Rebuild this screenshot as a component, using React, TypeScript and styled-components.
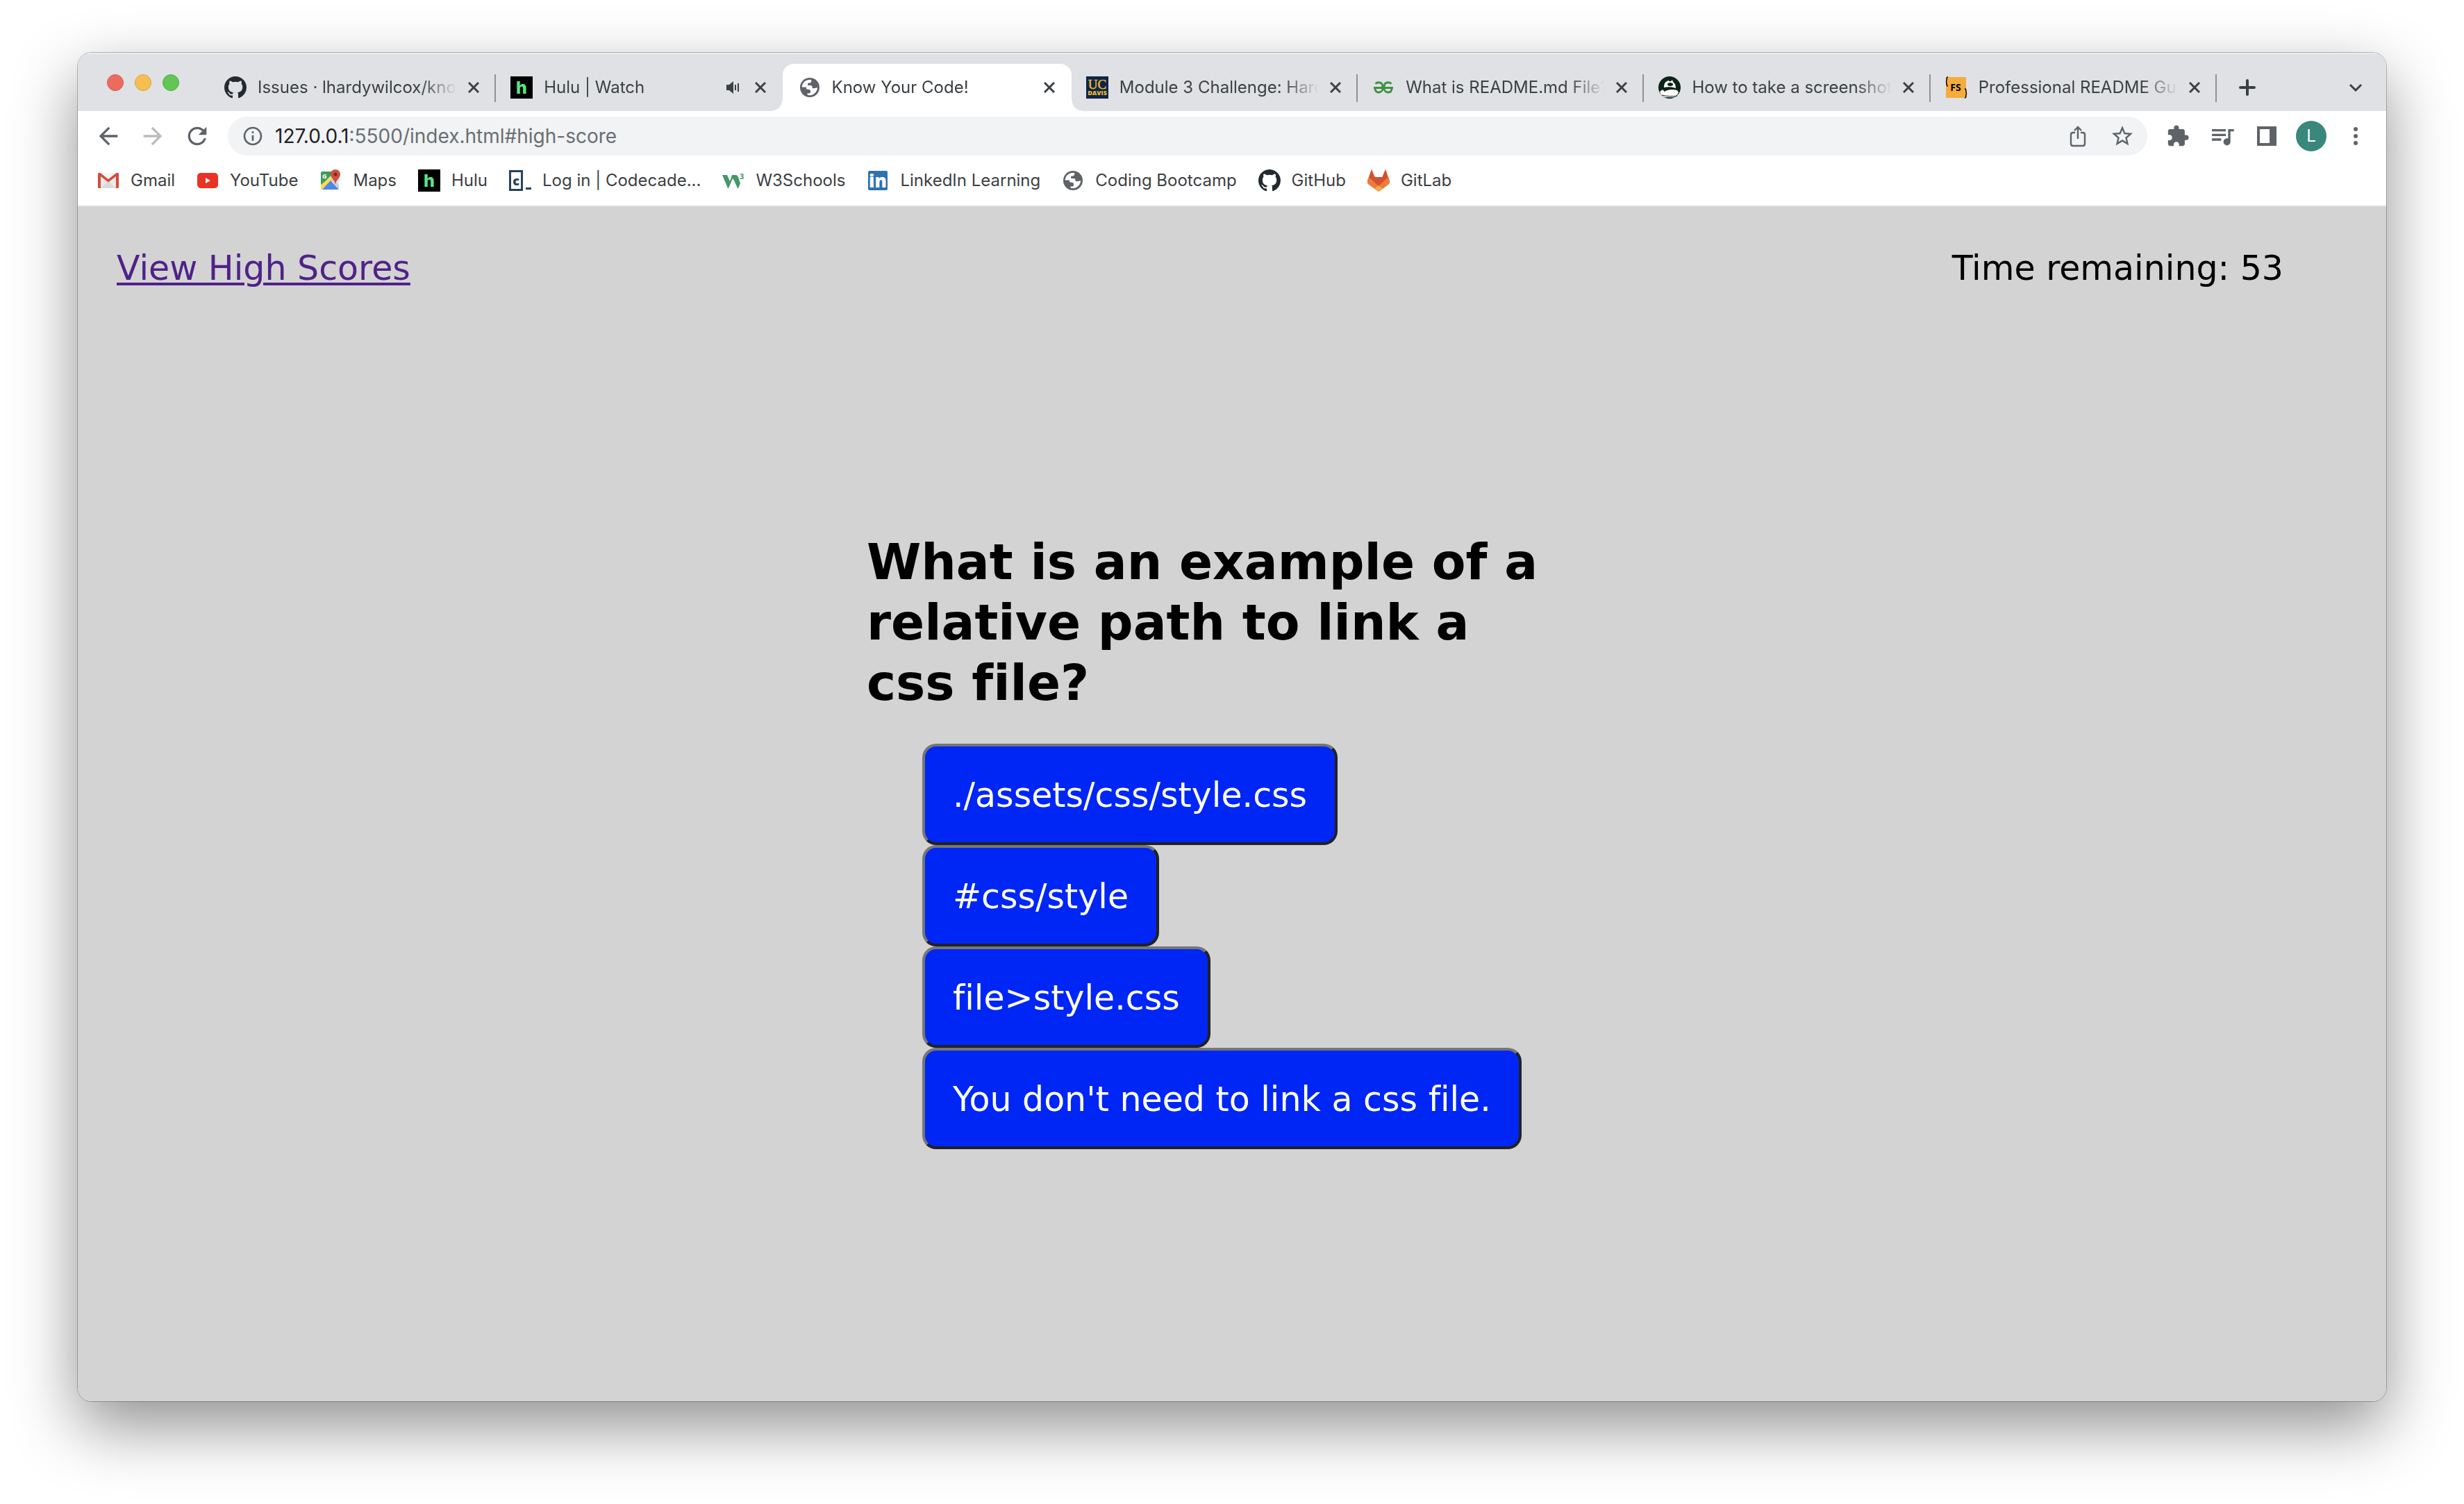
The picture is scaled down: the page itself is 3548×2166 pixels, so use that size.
import React from "react";
import styled, { createGlobalStyle, css } from "styled-components";
import {
  MdArrowBack,
  MdArrowForward,
  MdExtension,
  MdInfoOutline,
  MdQueueMusic,
  MdRefresh,
  MdStarBorder,
} from "react-icons/md";

const GlobalStyle = createGlobalStyle`
  *, *::before, *::after { box-sizing: border-box; }
  body { margin: 0; background: #ffffff; }
  button { font: inherit; color: inherit; cursor: pointer; }
`;

const uiFont = `Inter, "Liberation Sans", sans-serif`;
const pageFont = `Verdana, "DejaVu Sans", sans-serif`;

const Desktop = styled.div`
  display: flex;
  min-height: 100vh;
  padding: 76px 112px 148px;
`;

const BrowserWindow = styled.div`
  display: flex;
  flex: 1;
  flex-direction: column;
  min-width: 0;
  overflow: hidden;
  border-radius: 20px;
  background: #ffffff;
  color: #3c4043;
  font-family: ${uiFont};
  font-size: 24px;
  line-height: 32px;
  box-shadow: 0 0 0 1px rgba(0, 0, 0, 0.25), 0 36px 94px rgba(0, 0, 0, 0.44);
`;

const TabStrip = styled.header`
  display: flex;
  height: 84px;
  padding: 16px 32px 0 42px;
  background: #dfe1e5;
  box-shadow: inset 0 2px 0 #ebecef;
`;

const WindowControls = styled.div`
  display: flex;
  flex: none;
  gap: 16px;
  width: 148px;
  padding-top: 15px;
`;

const WindowDot = styled.button<{ $fill: string; $edge: string }>`
  width: 24px;
  height: 24px;
  padding: 0;
  border: 1px solid ${(p) => p.$edge};
  border-radius: 50%;
  background: ${(p) => p.$fill};
`;

const TabList = styled.div`
  display: flex;
  flex: 1;
  min-width: 0;
`;

const activeTab = css`
  flex-basis: 416px;
  padding-left: 23px;
  border-radius: 16px 16px 0 0;
  background: #ffffff;

  &::before,
  &::after {
    content: "";
    position: absolute;
    bottom: 0;
    width: 16px;
    height: 16px;
  }
  &::before {
    right: 100%;
    background: radial-gradient(circle at 0 0, transparent 15px, #ffffff 16px);
  }
  &::after {
    left: 100%;
    background: radial-gradient(circle at 100% 0, transparent 15px, #ffffff 16px);
  }
`;

const separator = css`
  &::after {
    content: "";
    position: absolute;
    right: 0;
    top: 15px;
    width: 2px;
    height: 40px;
    background: #8f9195;
  }
`;

const TabItem = styled.div<{ $active?: boolean; $separator?: boolean }>`
  position: relative;
  display: flex;
  flex: 1 1 412px;
  align-items: center;
  gap: 16px;
  min-width: 0;
  height: 68px;
  padding: 0 24px 0 21px;
  ${(p) => p.$separator && separator}
  ${(p) => p.$active && activeTab}
`;

const TabTitle = styled.span`
  flex: 1;
  min-width: 0;
  overflow: hidden;
  white-space: nowrap;
  mask-image: linear-gradient(to right, #000 calc(100% - 52px), transparent);
`;

const IconSlot = styled.span`
  display: flex;
  flex: none;
  align-items: center;
  justify-content: center;
  width: 32px;
  height: 32px;
`;

const IconButton = styled.button<{ $size: number; $muted?: boolean }>`
  display: flex;
  flex: none;
  align-items: center;
  justify-content: center;
  width: ${(p) => p.$size}px;
  height: ${(p) => p.$size}px;
  padding: 0;
  border: 0;
  background: none;
  color: ${(p) => (p.$muted ? "#babcbe" : "#5f6368")};
`;

const StripButton = styled(IconButton)`
  color: #3c4043;
`;

const StripActions = styled.div`
  display: flex;
  flex: none;
  align-items: center;
  justify-content: space-between;
  width: 212px;
  height: 68px;
  padding-left: 32px;
`;

const Toolbar = styled.nav`
  display: flex;
  align-items: center;
  height: 72px;
  padding: 0 12px;
`;

const Omnibox = styled.div`
  display: flex;
  flex: 1;
  align-items: center;
  min-width: 0;
  height: 56px;
  margin: 0 12px;
  padding: 0 4px;
  border-radius: 28px;
  background: #f1f3f4;
`;

const Address = styled.div`
  flex: 1;
  overflow: hidden;
  color: #6b6e72;
  font-size: 28px;
  white-space: nowrap;
`;

const Host = styled.span`
  color: #202124;
`;

const Avatar = styled.button`
  width: 44px;
  height: 44px;
  margin: 0 10px;
  padding: 0;
  border: 0;
  border-radius: 50%;
  background: #3a877b;
  && {
    color: #ffffff;
  }
`;

const Bookmarks = styled.nav`
  display: flex;
  align-items: center;
  gap: 31px;
  height: 66px;
  padding: 0 28px 8px;
  border-bottom: 2px solid #dcdcdc;
`;

const BookmarkLink = styled.a`
  display: flex;
  gap: 16px;
  color: #3c4043;
  text-decoration: none;
  white-space: nowrap;
`;

const Page = styled.div`
  flex: 1;
  background: #d3d3d3;
  color: #000000;
  font-family: ${pageFont};
  font-size: 49px;
  font-variant-ligatures: none;
  line-height: 58px;
`;

const PageHeader = styled.div`
  display: flex;
  justify-content: space-between;
  padding: 60px 148px 0 56px;
`;

const ScoresLink = styled.a`
  color: #4f2288;
  text-decoration-thickness: 4px;
  text-underline-offset: 4px;
`;

const Quiz = styled.main`
  max-width: 1052px;
  margin: 350px auto 0;
`;

const Question = styled.h1`
  margin: 0;
  padding-right: 52px;
  font-size: 71px;
  line-height: 87px;
`;

const Choices = styled.ul`
  display: flex;
  flex-direction: column;
  align-items: flex-start;
  margin: 44px 0 0;
  padding: 0 0 0 80px;
  list-style: none;
`;

const ChoiceButton = styled.button`
  display: block;
  padding: 42px 40px 38px;
  border: 4px solid;
  border-color: #767676 #212121 #212121 #767676;
  border-radius: 20px;
  background: #0026f5;
  color: #ffffff;
  font-variant-ligatures: none;
  white-space: nowrap;
`;

const CloseIcon = () => (
  <svg width="16" height="16" viewBox="0 0 16 16" stroke="currentColor" strokeWidth="3">
    <path d="M1 1l14 14M15 1L1 15" />
  </svg>
);

const SpeakerIcon = () => (
  <svg width="20" height="20" viewBox="0 0 20 20" fill="currentColor">
    <path d="M1 6h4l6-5v18l-6-5H1zM13 6h2v8h-2zM17 4h2v12h-2z" />
  </svg>
);

const GlobeIcon = () => (
  <svg width="28" height="28" viewBox="0 0 28 28">
    <circle cx="14" cy="14" r="14" fill="#5f6368" />
    <path
      d="M2.800 13.500C2.800 7.500 8 2.800 14.500 2.800c1 0 1.500.2 1.800.6.3 2-.3 3.600-2.300 4h-1.500c-1 0-1.500.6-1.500 1.500v1.200c0 .5.500.8 1 .8h3c2 0 2.500 1 2.500 2.500 0 1 .8 1.800 1.800 1.800l5.900-.9C24.800 20 20 25.200 14 25.200c-1.500 0-2.500-.2-3.500-.6v-2H13c1.200 0 2-.8 2-2v-1.500c0-1.500-1-2.400-2.200-2.400H11c-1.200 0-2-.8-2-1.700v-1.500z"
      fill="#ffffff"
    />
  </svg>
);

const HuluIcon = () => (
  <svg width="32" height="32" viewBox="0 0 32 32">
    <rect width="32" height="32" fill="#000" />
    <text x="16" y="25" textAnchor="middle" fontFamily="Inter, sans-serif" fontWeight="800" fontSize="25" fill="#5be58a">
      h
    </text>
  </svg>
);

const DavisIcon = () => (
  <svg width="32" height="32" viewBox="0 0 32 32" fill="#f2b82e" textAnchor="middle">
    <rect width="32" height="32" fill="#0d2549" />
    <text x="16" y="18" fontFamily="Liberation Serif, serif" fontSize="19" stroke="#f2b82e" strokeWidth="0.5">
      UC
    </text>
    <text x="16" y="27" fontFamily="Open Sans, sans-serif" fontWeight="800" fontSize="9">
      DAVIS
    </text>
  </svg>
);

const GeeksIcon = () => (
  <svg width="28" height="18" viewBox="0 0 28 18" fill="none" stroke="#3f9142" strokeWidth="2.800">
    <path d="M3 4c1-3 7-3 9 0 1 2 1 4 1 6 0 4-3 6-6 6s-5-2-5-6M25 4c-1-3-7-3-9 0-1 2-1 4-1 6 0 4 3 6 6 6s5-2 5-6M0 9.500h28" />
  </svg>
);

const BadgerIcon = () => (
  <svg width="32" height="32" viewBox="0 0 32 32">
    <circle cx="16" cy="16" r="16" fill="#0c2418" />
    <path d="M8 16c0-5 2-9 5-9l1-2 1 2h3l2-2 1 3c3 2 4 5 4 9-5-2-12-2-17-1z" fill="#fff" />
    <ellipse cx="17" cy="11.500" rx="4" ry="2.500" fill="#0c2418" />
    <path d="M2 22l4-3 3 3c3-3 12-4 18-2l2 3c-1 3-4 6-7 7H10c-4-1-7-4-8-8z" fill="#fff" />
    <path d="M5 27c8 2 15 2 22 1" stroke="#0c2418" fill="none" />
  </svg>
);

const FullStackIcon = () => (
  <svg width="32" height="32" viewBox="0 0 32 32" fontFamily="Open Sans, sans-serif">
    <rect x="1" y="1" width="29" height="30" fill="#f6ac3c" />
    <text x="15" y="21" textAnchor="middle" fontWeight="700" fontSize="14">
      FS
    </text>
    <path
      d="M4 1c-3-1-1 6-3 6.500 2 .5 0 7 3 6.500M28 18c3-1 1 6 3 6.500-2 .5 0 7-3 6.500"
      fill="none"
      stroke="#000"
      strokeWidth="1.500"
    />
  </svg>
);

const GmailIcon = () => (
  <svg width="32" height="32" viewBox="0 0 32 32">
    <rect x="1" y="5" width="30" height="22" rx="2" fill="#e9e9e9" />
    <path d="M5 27l11-10 11 10z" fill="#dadada" />
    <path d="M5 8l11 9 11-9-2-3H7z" fill="#f5f5f5" />
    <path
      d="M1 7c0-3 3-2.500 4-1.500L16 14 27 5.500c1-1 4-1.500 4 1.500v18c0 1.500-1 2-2 2h-2V10l-11 8.500L5 10v17H3c-1 0-2-.5-2-2z"
      fill="#d54b3d"
    />
  </svg>
);

const YouTubeIcon = () => (
  <svg width="32" height="32" viewBox="0 0 32 32">
    <rect x="1" y="5" width="30" height="22" rx="5" fill="#ea3323" />
    <path d="M13 12v8l7-4z" fill="#fff" />
  </svg>
);

const MapsIcon = () => (
  <svg width="32" height="32" viewBox="0 0 32 32">
    <rect x="2" y="3" width="26" height="26" rx="2" fill="#e6e6e6" />
    <path d="M4 3h18L2 24V5c0-1 1-2 2-2z" fill="#419a5b" />
    <path d="M2 22L19 9l3 4L6 29H4c-1 0-2-1-2-2z" fill="#fbdc4d" />
    <path d="M4 29l12-13 12 13z" fill="#5087ec" />
    <path d="M17 15l2-2 9 10v5z" fill="#cfcfcf" />
    <path d="M23 0c4 0 7 3 7 7 0 6-6 7-7 15-1-8-7-9-7-15 0-4 3-7 7-7z" fill="#d05041" />
    <circle cx="23" cy="7" r="2.500" fill="#7a2a20" />
    <text x="4" y="13" fontFamily="Open Sans, sans-serif" fontWeight="700" fontSize="9" fill="#fff">
      G
    </text>
  </svg>
);

const CodecademyIcon = () => (
  <svg width="32" height="32" viewBox="0 0 32 32">
    <rect x="1.500" y="2.500" width="17" height="27" fill="#fff" stroke="#26425a" strokeWidth="3" />
    <text
      x="10"
      y="23"
      textAnchor="middle"
      fontFamily="Open Sans, sans-serif"
      fontWeight="800"
      fontSize="18"
      fill="#26425a"
    >
      c
    </text>
    <rect x="24" y="26" width="8" height="3" fill="#26425a" />
  </svg>
);

const SchoolsIcon = () => (
  <svg width="32" height="32" viewBox="0 0 32 32" fill="#43986b">
    <path d="M0 8h7l4 9 3-9h5c2 0 3 1 4 3l3 9-3 7h-1l-5-11-2-3-6 14h-1z" />
    <text x="25" y="14" fontFamily="Open Sans, sans-serif" fontWeight="700" fontSize="11">
      3
    </text>
  </svg>
);

const LinkedInIcon = () => (
  <svg width="32" height="32" viewBox="0 0 32 32">
    <rect x="2" y="2" width="28" height="28" rx="2" fill="#2e72af" />
    <text
      x="16"
      y="26"
      textAnchor="middle"
      fontFamily="Open Sans, sans-serif"
      fontWeight="800"
      fontSize="26"
      fill="#fff"
    >
      in
    </text>
  </svg>
);

const GitLabIcon = () => (
  <svg width="32" height="32" viewBox="0 0 32 32">
    <path d="M6 0l5 11h10l5-11 6 16c1 2 0 4-1 5L16 32 1 21c-1-1-2-3-1-5z" fill="#e9783a" />
    <path d="M6 0l4 11h12l4-11 4 12L16 26 2 12z" fill="#d25033" />
    <path d="M2 11l14 13L30 11l2 5c1 2 0 4-1 5L16 32 1 21c-1-1-2-3-1-5z" fill="#ed7b3a" />
    <path d="M6 11h20L16 23z" fill="#d25033" />
    <path d="M16 23l6 5-6 4-6-4z" fill="#f3a74a" />
  </svg>
);

const GitHubIcon = () => (
  <svg width="32" height="32" viewBox="0 0 16 16" fill="#24292f">
    <path
      fillRule="evenodd"
      d="M8 0C3.580 0 0 3.580 0 8c0 3.540 2.290 6.530 5.470 7.590.4.070.550-.170.550-.380 0-.190-.010-.820-.010-1.490-2.010.370-2.530-.490-2.690-.940-.090-.230-.480-.940-.820-1.130-.280-.150-.680-.520-.010-.530.630-.010 1.080.580 1.230.820.720 1.210 1.870.870 2.330.660.070-.520.280-.870.510-1.070-1.780-.2-3.640-.890-3.640-3.950 0-.870.310-1.590.820-2.150-.080-.2-.360-1.020.080-2.120 0 0 .670-.210 2.200.820.640-.180 1.320-.270 2-.270s1.360.090 2 .270c1.530-1.040 2.200-.820 2.200-.820.440 1.100.160 1.920.080 2.120.510.560.820 1.270.820 2.150 0 3.070-1.870 3.750-3.650 3.950.290.250.540.730.540 1.480 0 1.070-.010 1.930-.010 2.200 0 .210.150.460.550.380A8.013 8.013 0 0 0 16 8c0-4.420-3.580-8-8-8z"
    />
  </svg>
);

const ShareIcon = () => (
  <svg width="32" height="32" viewBox="0 0 32 32" fill="none" stroke="currentColor" strokeWidth="2.400">
    <path d="M12 11H9c-1.800 0-3 1.200-3 3v13c0 1.800 1.200 3 3 3h14c1.800 0 3-1.200 3-3V14c0-1.800-1.200-3-3-3h-3M16 20V4M11 8l5-5 5 5" />
  </svg>
);

const SidePanelIcon = () => (
  <svg width="28" height="28" viewBox="0 0 28 28">
    <path d="M0 0h28v28H0zM4 4v20h14V4z" fill="currentColor" fillRule="evenodd" />
  </svg>
);

const MenuIcon = () => (
  <svg width="28" height="28" viewBox="0 0 28 28" fill="currentColor">
    <circle cx="14" cy="4" r="3" />
    <circle cx="14" cy="14" r="3" />
    <circle cx="14" cy="24" r="3" />
  </svg>
);

const PlusIcon = () => (
  <svg width="24" height="24" viewBox="0 0 24 24" stroke="currentColor" strokeWidth="4" strokeLinecap="round">
    <path d="M12 2v20M2 12h20" />
  </svg>
);

const ChevronIcon = () => (
  <svg width="20" height="12" viewBox="0 0 20 12" fill="none" stroke="currentColor" strokeWidth="3">
    <path d="M2 2l8 8 8-8" />
  </svg>
);

interface TabData {
  title: string;
  icon: React.ComponentType;
  active?: boolean;
  audible?: boolean;
  separator?: boolean;
}

const tabs: TabData[] = [
  { title: "Issues · lhardywilcox/know", icon: GitHubIcon, separator: true },
  { title: "Hulu | Watch", icon: HuluIcon, audible: true },
  { title: "Know Your Code!", icon: GlobeIcon, active: true },
  { title: "Module 3 Challenge: Hard", icon: DavisIcon, separator: true },
  { title: "What is README.md File?", icon: GeeksIcon, separator: true },
  { title: "How to take a screenshot", icon: BadgerIcon, separator: true },
  { title: "Professional README Gui", icon: FullStackIcon, separator: true },
];

const bookmarks: { label: string; icon: React.ComponentType }[] = [
  { label: "Gmail", icon: GmailIcon },
  { label: "YouTube", icon: YouTubeIcon },
  { label: "Maps", icon: MapsIcon },
  { label: "Hulu", icon: HuluIcon },
  { label: "Log in | Codecade...", icon: CodecademyIcon },
  { label: "W3Schools", icon: SchoolsIcon },
  { label: "LinkedIn Learning", icon: LinkedInIcon },
  { label: "Coding Bootcamp", icon: GlobeIcon },
  { label: "GitHub", icon: GitHubIcon },
  { label: "GitLab", icon: GitLabIcon },
];

const choices = ["./assets/css/style.css", "#css/style", "file>style.css", "You don't need to link a css file."];

export default function App() {
  return (
    <>
      <GlobalStyle />
      <Desktop>
        <BrowserWindow>
          <TabStrip>
            <WindowControls>
              <WindowDot $fill="#ec6b5f" $edge="#d8584c" aria-label="Close window" />
              <WindowDot $fill="#f5be4f" $edge="#dba33c" aria-label="Minimize window" />
              <WindowDot $fill="#62c554" $edge="#4fae42" aria-label="Zoom window" />
            </WindowControls>
            <TabList role="tablist">
              {tabs.map(({ title, icon: Icon, active, audible, separator: line }) => (
                <TabItem key={title} role="tab" aria-selected={!!active} $active={active} $separator={line}>
                  <IconSlot>
                    <Icon />
                  </IconSlot>
                  <TabTitle>{title}</TabTitle>
                  {audible && (
                    <StripButton $size={32} aria-label="Mute tab">
                      <SpeakerIcon />
                    </StripButton>
                  )}
                  <StripButton $size={16} aria-label="Close tab">
                    <CloseIcon />
                  </StripButton>
                </TabItem>
              ))}
            </TabList>
            <StripActions>
              <StripButton $size={24} aria-label="New tab">
                <PlusIcon />
              </StripButton>
              <StripButton $size={24} aria-label="Search tabs">
                <ChevronIcon />
              </StripButton>
            </StripActions>
          </TabStrip>

          <Toolbar>
            <IconButton $size={64} aria-label="Back">
              <MdArrowBack size={40} />
            </IconButton>
            <IconButton $size={64} $muted aria-label="Forward">
              <MdArrowForward size={40} />
            </IconButton>
            <IconButton $size={64} aria-label="Reload">
              <MdRefresh size={40} />
            </IconButton>
            <Omnibox>
              <IconButton $size={64} aria-label="Site information">
                <MdInfoOutline size={32} />
              </IconButton>
              <Address role="textbox" tabIndex={0} aria-label="Address">
                <Host>127.0.0.1</Host>:5500/index.html#high-score
              </Address>
              <IconButton $size={64} aria-label="Share">
                <ShareIcon />
              </IconButton>
              <IconButton $size={64} aria-label="Bookmark this page">
                <MdStarBorder size={36} />
              </IconButton>
            </Omnibox>
            <IconButton $size={64} aria-label="Extensions">
              <MdExtension size={34} />
            </IconButton>
            <IconButton $size={64} aria-label="Media controls">
              <MdQueueMusic size={40} />
            </IconButton>
            <IconButton $size={64} aria-label="Side panel">
              <SidePanelIcon />
            </IconButton>
            <Avatar aria-label="Profile">L</Avatar>
            <IconButton $size={64} aria-label="Menu">
              <MenuIcon />
            </IconButton>
          </Toolbar>

          <Bookmarks aria-label="Bookmarks">
            {bookmarks.map(({ label, icon: Icon }) => (
              <BookmarkLink key={label} href="#">
                <IconSlot>
                  <Icon />
                </IconSlot>
                {label}
              </BookmarkLink>
            ))}
          </Bookmarks>

          <Page>
            <PageHeader>
              <ScoresLink href="#high-score">View High Scores</ScoresLink>
              <span>Time remaining: 53</span>
            </PageHeader>
            <Quiz>
              <Question>What is an example of a relative path to link a css file?</Question>
              <Choices>
                {choices.map((choice) => (
                  <li key={choice}>
                    <ChoiceButton>{choice}</ChoiceButton>
                  </li>
                ))}
              </Choices>
            </Quiz>
          </Page>
        </BrowserWindow>
      </Desktop>
    </>
  );
}
